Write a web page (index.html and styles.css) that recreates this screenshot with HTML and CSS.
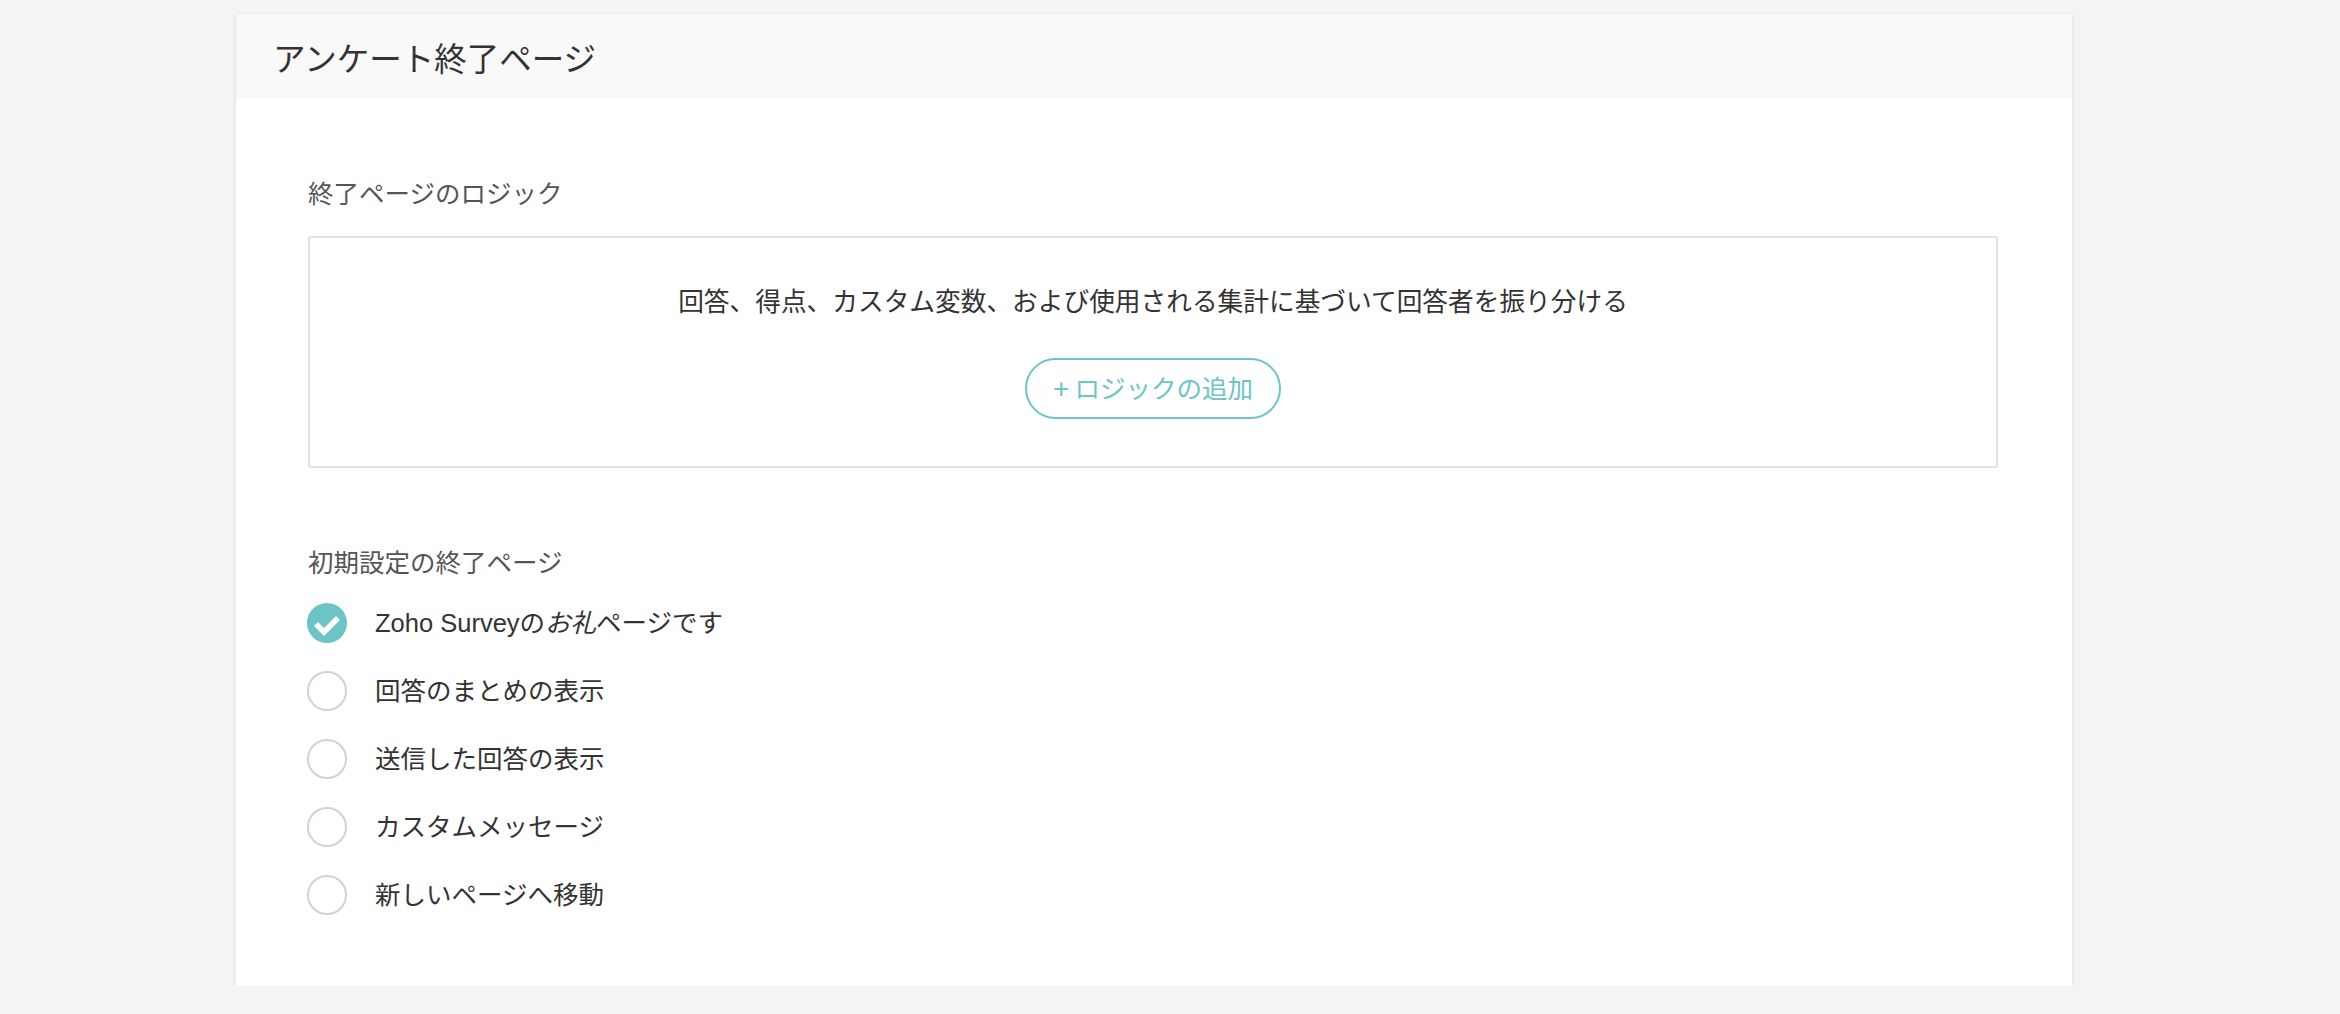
FILE: index.html
```html
<!DOCTYPE html>
<html lang="ja">
<head>
<meta charset="utf-8">
<link rel="stylesheet" href="styles.css">
</head>
<body>
<div class="card">
  <div class="card-header">アンケート終了ページ</div>
  <div class="card-body">
    <div class="section-label">終了ページのロジック</div>
    <div class="logic-box">
      <div class="logic-desc">回答、得点、カスタム変数、および使用される集計に基づいて回答者を振り分ける</div>
      <button class="add-btn"><span class="plus">+</span>ロジックの追加</button>
    </div>
    <div class="section-label second">初期設定の終了ページ</div>
    <ul class="options">
      <li class="option">
        <span class="radio checked">
          <svg width="40" height="40" viewBox="0 0 40 40"><path d="M9 21 L17 29 L31 15" fill="none" stroke="#fff" stroke-width="5.5"/></svg>
        </span>
        <span class="opt-text">Zoho Surveyの<i>お礼</i>ページです</span>
      </li>
      <li class="option"><span class="radio"></span><span class="opt-text">回答のまとめの表示</span></li>
      <li class="option"><span class="radio"></span><span class="opt-text">送信した回答の表示</span></li>
      <li class="option"><span class="radio"></span><span class="opt-text">カスタムメッセージ</span></li>
      <li class="option"><span class="radio"></span><span class="opt-text">新しいページへ移動</span></li>
    </ul>
  </div>
</div>
</body>
</html>
```
FILE: styles.css
```css
html, body {
  margin: 0;
  padding: 0;
  background: #f4f4f4;
}
body {
  padding-top: 14px;
  font-family: "Liberation Sans", "Noto Sans CJK JP", sans-serif;
  color: #333;
}
.card {
  margin-left: 236px;
  width: 1836px;
  background: #fff;
  box-shadow: 0 1px 4px rgba(0, 0, 0, 0.12);
}
.card-header {
  height: 85px;
  display: flex;
  align-items: center;
  padding-left: 37px;
  background: #f9f9f9;
  font-size: 32.5px;
  color: #333;
}
.card-body {
  padding: 77px 74px 57px 72px;
}
.section-label {
  font-size: 25.5px;
  line-height: 36px;
  color: #555;
}
.section-label.second {
  margin-top: 77px;
}
.logic-box {
  margin-top: 24px;
  border: 2px solid #e3e3e3;
  border-radius: 3px;
  display: flex;
  flex-direction: column;
  align-items: center;
  padding-top: 46px;
  box-sizing: border-box;
  height: 232px;
}
.logic-desc {
  font-size: 25.7px;
  line-height: 36px;
  color: #333;
}
.add-btn {
  margin-top: 38px;
  height: 61px;
  padding: 0 26px;
  border: 2px solid #6cc5c4;
  border-radius: 31px;
  background: #fff;
  color: #6cc5c4;
  font-family: "Liberation Sans", "Noto Sans CJK JP", sans-serif;
  font-size: 25.5px;
  line-height: 36px;
  display: flex;
  align-items: center;
}
.plus {
  margin-right: 5px;
  font-size: 28px;
}
.options {
  list-style: none;
  margin: 8px 0 0 0;
  padding: 0;
}
.option {
  height: 68px;
  display: flex;
  align-items: center;
}
.radio {
  width: 40px;
  height: 40px;
  box-sizing: border-box;
  border: 2.5px solid #d2d2d2;
  border-radius: 50%;
  flex: none;
  margin-left: -1px;
  display: flex;
  align-items: center;
  justify-content: center;
}
.radio.checked {
  border: none;
  background: #6cc5c4;
}
.opt-text {
  margin-left: 28px;
  font-size: 25.5px;
  line-height: 36px;
  color: #333;
}
.opt-text i {
  font-style: italic;
}
```
